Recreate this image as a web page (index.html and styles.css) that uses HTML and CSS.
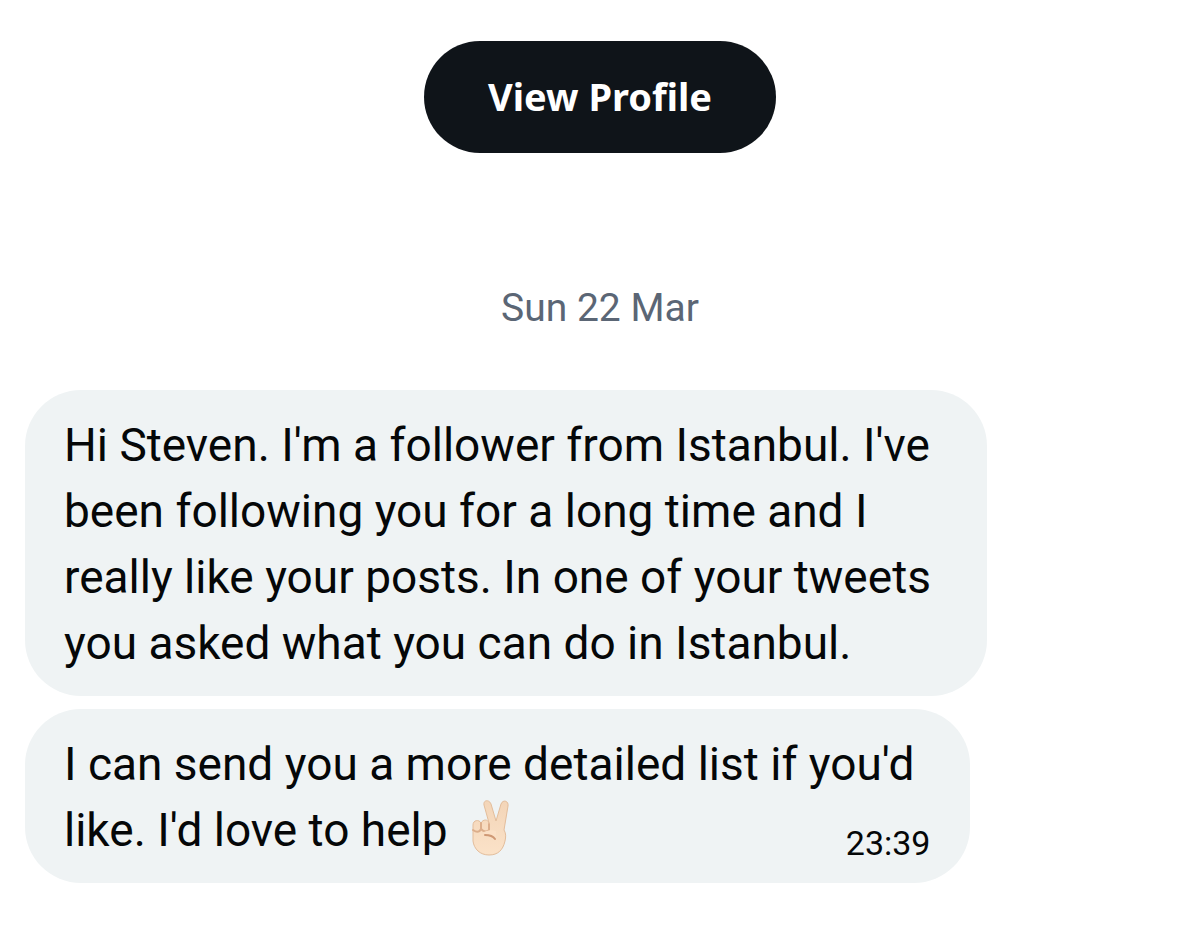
FILE: index.html
```html
<!DOCTYPE html>
<html lang="en">
<head>
    <meta charset="UTF-8">
    <title>Messages</title>
    <link rel="stylesheet" href="styles.css">
</head>
<body>
<main class="chat">
    <button type="button" class="profile-btn">View Profile</button>
    <time class="day">Sun 22 Mar</time>
    <div class="messages">
        <p class="bubble">Hi Steven. I'm a follower from Istanbul. I've<br>been following you for a long time and I<br>really like your posts. In one of your tweets<br>you asked what you can do in Istanbul.</p>
        <div class="bubble last">
            <p class="text">I can send you a more detailed list if you'd<br>like. I'd love to help
                <svg class="hand" viewBox="0 0 40 56" role="img" aria-label="Victory hand">
                    <defs>
                        <linearGradient id="skin" x1="0" y1="0" x2="0" y2="1">
                            <stop offset="0" stop-color="#f3d5b8"/>
                            <stop offset="1" stop-color="#fbe2c8"/>
                        </linearGradient>
                    </defs>
                    <path fill="url(#skin)" stroke="#e3bd9b" d="M13 5C12 0 18-1 20 4l5 17L30 4c2-5 8-3 7 2l-4 24c2 3 2 7 1 11-2 9-7 14-16 14C9 55 3 49 2 41V25c0-5 6-6 8-2 2-4 7-4 8 0z"/>
                    <path fill="none" stroke="#dcae8b" stroke-width="2" stroke-linecap="round" d="M10 23v6c-2 4-5 3-8 1M18 24v6c-2 2-5 2-8-1"/>
                    <path fill="#fbe0c6" d="M13 32c4-2 9-2 12-1v7c-3-3-7-3-11-3z"/>
                    <path fill="none" stroke="#cf9874" stroke-width="2" stroke-linecap="round" d="M14 35c5 0 8 1 10 4"/>
                </svg>
            </p>
            <time class="time">23:39</time>
        </div>
    </div>
</main>
</body>
</html>
```
FILE: styles.css
```css
body {
    margin: 0;
    background: #fff;
    color: #050708;
    font-family: Roboto, "Liberation Sans", sans-serif;
}
.chat {
    display: flex;
    flex-direction: column;
    align-items: center;
    padding: 41px 25px 66px;
}
.profile-btn {
    padding: 0 64px 2px;
    border: 0;
    border-radius: 56px;
    background: #0f1419;
    color: #fff;
    font: bold 38px/110px "Noto Sans", sans-serif;
}
.day {
    margin: 131px 0 58px;
    color: #5b6675;
    font-size: 39px;
    line-height: 48px;
}
.messages {
    align-self: stretch;
    display: flex;
    flex-direction: column;
    align-items: flex-start;
    gap: 13px;
}
.bubble {
    margin: 0;
    padding: 22px 56px 20px 39px;
    border-radius: 56px;
    background: #eff3f4;
    font-size: 46px;
    line-height: 66px;
}
/* time shares the cell with the text and sits in its bottom corner */
.last {
    display: grid;
    padding-right: 40px;
}
.text, .time {
    grid-area: 1 / 1;
}
.text {
    margin: 0 16px 0 0;
}
.hand {
    width: 40px;
    height: 56px;
    margin: -10px 0 0 12px;
    vertical-align: -10px;
}
.time {
    place-self: end;
    font-size: 34px;
    line-height: 40px;
}
```
